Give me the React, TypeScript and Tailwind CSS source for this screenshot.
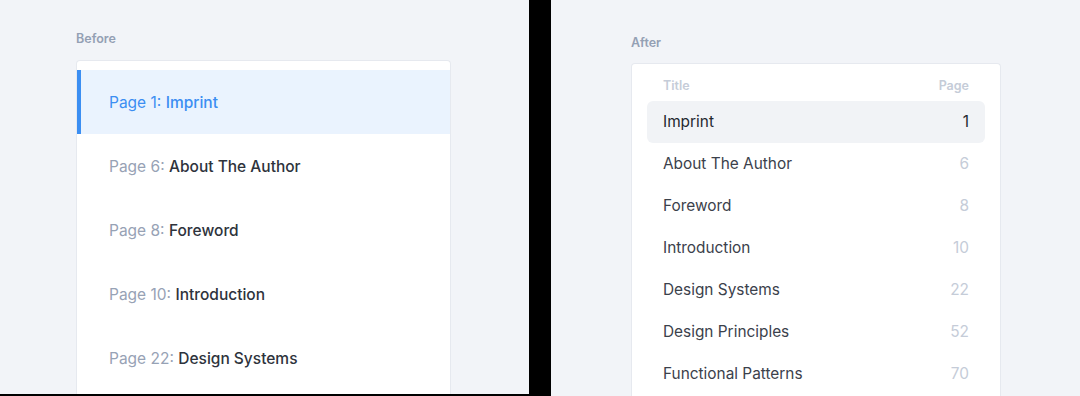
import React from "react";

const before = [
  { p: 1, t: "Imprint" },
  { p: 6, t: "About The Author" },
  { p: 8, t: "Foreword" },
  { p: 10, t: "Introduction" },
  { p: 22, t: "Design Systems" },
];

const after = [
  { p: 1, t: "Imprint" },
  { p: 6, t: "About The Author" },
  { p: 8, t: "Foreword" },
  { p: 10, t: "Introduction" },
  { p: 22, t: "Design Systems" },
  { p: 52, t: "Design Principles" },
  { p: 70, t: "Functional Patterns" },
];

export default function App() {
  return (
    <div
      className="flex h-[396px] w-[1080px] overflow-hidden bg-black"
      style={{ fontFamily: "Inter, 'Noto Sans', sans-serif" }}
    >
      <div className="flex h-[394px] w-[529px] flex-col overflow-hidden bg-[#f2f4f8] pl-[76px] pt-[31px]">
        <div className="text-[12.5px] font-semibold leading-4 text-[#94a0b4]">Before</div>
        <div className="mt-[13px] w-[375px] flex-1 overflow-hidden rounded-t-[4px] border border-b-0 border-[#e6e9ef] bg-white pt-[9px]">
          {before.map((r, i) => (
            <div
              key={r.p}
              className={
                i === 0
                  ? "-ml-px flex h-16 items-center border-l-[5px] border-[#3b8ef2] bg-[#eaf3fe] pl-[28px] pt-[2px] text-[15.5px] text-[#3b8ef2]"
                  : "flex h-16 items-center pl-[32px] pt-[2px] text-[15.5px] text-[#97a2b5]"
              }
            >
              <span>Page {r.p}:&nbsp;</span>
              <span className={i === 0 ? "font-medium" : "font-medium text-[#2e333c]"}>{r.t}</span>
            </div>
          ))}
        </div>
      </div>
      <div className="ml-[22px] flex h-[396px] w-[529px] flex-col overflow-hidden bg-[#f2f4f8] pl-[80px] pt-[35px]">
        <div className="text-[12.5px] font-semibold leading-4 text-[#94a0b4]">After</div>
        <div className="mt-[12px] w-[370px] flex-1 rounded-t-[4px] border border-b-0 border-[#e6e9ef] bg-white px-[15px] pt-[14px]">
          <div className="flex h-[17px] items-center justify-between px-4 text-[12.5px] font-semibold text-[#c5ccd8]">
            <span>Title</span>
            <span>Page</span>
          </div>
          <div className="mt-[6px]">
            {after.map((r, i) => (
              <div
                key={r.p}
                className={
                  i === 0
                    ? "flex h-[42px] items-center justify-between rounded-[6px] bg-[#f1f3f6] px-4 text-[15.4px] text-[#24282f]"
                    : "flex h-[42px] items-center justify-between px-4 text-[15.4px] text-[#3b414b]"
                }
              >
                <span>{r.t}</span>
                <span className={i === 0 ? "text-[#24282f]" : "text-[#c5ccd8]"}>{r.p}</span>
              </div>
            ))}
          </div>
        </div>
      </div>
    </div>
  );
}
